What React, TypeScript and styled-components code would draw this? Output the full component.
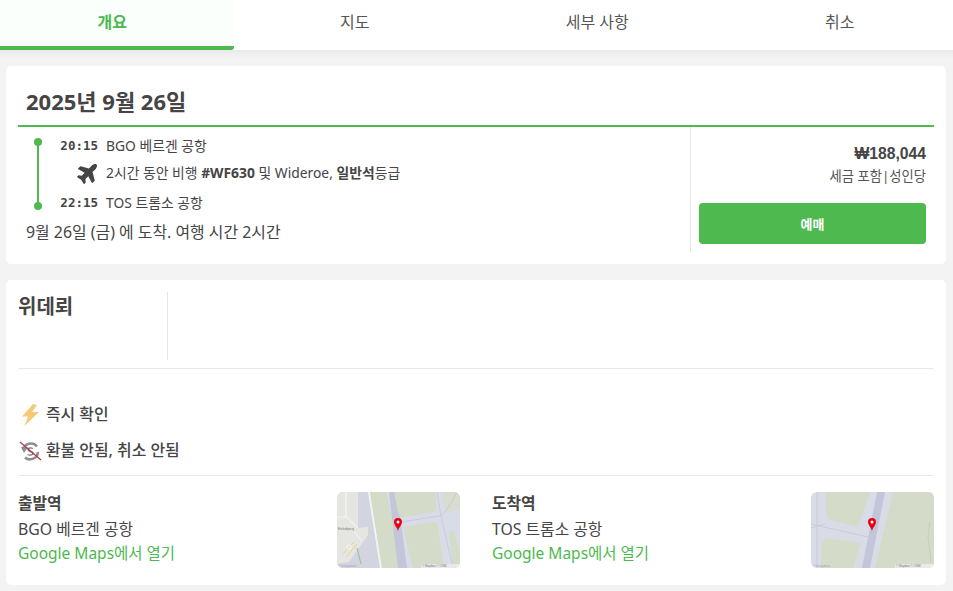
import React from "react";
import styled, { createGlobalStyle } from "styled-components";
import { FaPlane } from "react-icons/fa";

const Global = createGlobalStyle`
  html, body { margin: 0; padding: 0; background: #f3f3f3; }
  body { font-family: "Noto Sans", "Noto Sans CJK KR", sans-serif; color: #454545; height: 591px; overflow: hidden; }
  * { box-sizing: border-box; }
`;
const Tabs = styled.nav`
  display: grid; grid-template-columns: repeat(4, 1fr); height: 50px; background: #fff;
  width: 970px; margin-left: -9px;
  box-shadow: 0 2px 8px rgba(0,0,0,.06);
`;
const Tab = styled.div<{ $active?: boolean }>`
  display: flex; align-items: flex-start; justify-content: center; padding-top: 11px;
  font-size: 16px; line-height: 22px; height: 50px;
  color: ${p => (p.$active ? "#4cb84f" : "#555")};
  font-weight: ${p => (p.$active ? 700 : 400)};
  background: ${p => (p.$active ? "#fbfffb" : "#fff")};
  border-bottom: ${p => (p.$active ? "4px solid #4db94f" : "none")};
  border-radius: 0 0 3px 3px;
`;
const Page = styled.main`
  display: flex; flex-direction: column; gap: 16px; padding: 16px 7px 0 6px;
`;
const Card = styled.section<{ $h: number }>`
  background: #fff; border-radius: 5px; padding: 0 12px; height: ${p => p.$h}px;
`;
const DateTitle = styled.h2`
  margin: 0; height: 61px; border-bottom: 2px solid #4db94f; padding: 21px 8px 0;
  font-size: 22px; line-height: 29px; font-weight: 700; color: #454545;
`;
const FlightRow = styled.div`
  display: grid; grid-template-columns: 673px 1fr; height: 125px;
`;
const Left = styled.div`
  border-right: 1px solid #e6e6e6; padding: 9px 8px 0 8px;
`;
const Timeline = styled.div`
  display: grid; grid-template-columns: 24px 1fr;
`;
const Rail = styled.div`
  position: relative; width: 8px; margin: 2px 0 0 8px; height: 72px;
  &::before { content: ""; position: absolute; left: 3px; top: 3px; bottom: 3px; width: 2px; background: #4db94f; }
`;
const Dot = styled.i<{ $bottom?: boolean }>`
  position: absolute; left: 0; width: 8px; height: 8px; border-radius: 50%; background: #4db94f;
  ${p => (p.$bottom ? "bottom: 0;" : "top: 0;")}
`;
const Stops = styled.div`
  display: grid; grid-template-rows: 19px 36px 24px; font-size: 13.85px; align-items: center;
`;
const Stop = styled.div`
  display: grid; grid-template-columns: 49px 1fr; column-gap: 8px; align-items: center;
  margin-left: -1px; line-height: 18px;
`;
const Time = styled.span`
  font-family: "DejaVu Sans Mono", monospace; font-weight: 700; font-size: 12.5px; text-align: right; color: #454545;
`;
const PlaneCell = styled.span`
  display: flex; justify-content: flex-end; font-size: 23px; line-height: 0; color: #454545; margin-right: -2px;
  svg { transform: rotate(-45deg); display: block; margin-top: -2px; }
`;
const B = styled.b`font-weight: 700;`;
const Arrive = styled.div`
  font-size: 15.9px; line-height: 20px; margin-top: 7px;
`;
const Right = styled.div`
  display: flex; flex-direction: column; align-items: stretch; padding: 18px 8px 0 8px; text-align: right;
`;
const Price = styled.div`
  font-family: "Liberation Sans", sans-serif; font-weight: 700; font-size: 15.7px; line-height: 18px; color: #454545;
`;
const Tax = styled.div`
  font-size: 13.3px; line-height: 18px; margin-top: 4px; color: #555;
`;
const Buy = styled.button`
  margin-top: 18px; height: 41px; border: 0; border-radius: 4px; background: #4db94f; color: #fff;
  font: 700 13px "Noto Sans", "Noto Sans CJK KR", sans-serif; padding: 0;
`;
const AirlineRow = styled.div`
  height: 77px; margin-top: 12px; border-bottom: 1px solid #e8e8e8;
`;
const AirlineName = styled.h3`
  margin: 0; width: 150px; height: 68px; border-right: 1px solid #e6e6e6;
  font-size: 20px; line-height: 30px; font-weight: 700; color: #454545;
`;
const Perks = styled.div`
  height: 107px; border-bottom: 1px solid #e8e8e8; padding-top: 33px; display: flex; flex-direction: column; gap: 14px;
`;
const Perk = styled.div`
  display: flex; align-items: center; gap: 4px; height: 22px; font-size: 15.9px; font-weight: 500; color: #454545;
`;
const PerkIcon = styled.svg`
  width: 24px; height: 24px; flex: none; margin-top: 4px;
`;
const Places = styled.div`
  display: grid; grid-template-columns: 1fr 1fr; column-gap: 32px; padding-top: 16px;
`;
const Place = styled.div`
  display: flex; justify-content: space-between;
`;
const PlaceText = styled.div`
  display: flex; flex-direction: column; font-size: 15.8px; line-height: 24px; margin-top: -1px;
`;
const PlaceTitle = styled.strong`font-weight: 700; font-size: 15.8px; margin-bottom: 2px;`;
const Link = styled.a`color: #4db94f; font-size: 15.5px;`;
const MapFrame = styled.svg`
  width: 123px; height: 76px; border-radius: 6px; display: block; flex: none;
`;

const GREEN = "#d4dbc8";
const LAV = "#d9dbe6";
const RUN = "#c3c6da";

const Pin = ({ x, y }: { x: number; y: number }) => (
  <g transform={`translate(${x} ${y})`}>
    <path d="M0 5C-1 1-4-1-4-4A4 4 0 1 1 4-4C4-1 1 1 0 5Z" fill="#e9000f" />
    <circle cx="0" cy="-4" r="1.500" fill="#fff" />
  </g>
);
const Attribution = () => (
  <g>
    <rect x="84" y="72" width="38" height="4" fill="#e9e9e9" />
    <text x="85" y="75" fontSize="3" fill="#777" fontFamily="Liberation Sans, sans-serif">© Mapbox © OSM</text>
    <text x="2" y="74.500" fontSize="4" fill="#a9adb4" fontFamily="Liberation Sans, sans-serif">©mapbox</text>
  </g>
);

const MapA = () => (
  <MapFrame viewBox="0 0 123 76">
    <defs><filter id="ba"><feGaussianBlur stdDeviation=".4" /></filter></defs>
    <rect width="123" height="76" fill={LAV} />
    <g filter="url(#ba)">
      <path d="M0 0H31L43 76H0Z" fill="#d2d4df" />
      <path d="M0 0H21V36L31 35V43L12 70L0 72Z" fill="#e5e5e1" />
      <path d="M9 0V25H0M9 25L21 36M14 36L24 48" stroke="#f7f7f5" strokeWidth="1" fill="none" />
      <path d="M31 0L43 76H45L33 0Z" fill="#f3f3f5" />
      <path d="M33 0H49L68 76H45Z" fill={GREEN} />
      <path d="M52 0H60L70 76H61Z" fill={RUN} />
      <path d="M57 0H98Q101 16 97 20L66 25Q62 25 61 20Z" fill={GREEN} />
      <path d="M66 35L96 30Q100 30 101 36L107 76H76Z" fill={GREEN} />
      <path d="M105 0H123V16L112 21Q107 18 105 0Z" fill="#d8ddcf" />
      <path d="M112 40L116 38L123 60V76H116Z" fill={GREEN} />
      <path d="M64 30L102 24Q108 24 120 0M100 0L104 24L116 76" stroke="#c9cbdc" strokeWidth="1" fill="none" />
      <path d="M6 62L17 50M9 65L20 52" stroke="#e6d58a" strokeWidth="1" />
      <path d="M20 56L24 72" stroke="#9dbb94" strokeWidth="1" />
      <circle cx="12" cy="55" r="2" fill="none" stroke="#f7f7f5" strokeWidth="1" />
    </g>
    <text x="1" y="37.500" fontSize="3.600" fill="#777" fontFamily="Liberation Sans, sans-serif">Eriksbjerg</text>
    <Attribution />
    <Pin x={61} y={34} />
  </MapFrame>
);
const MapB = () => (
  <MapFrame viewBox="0 0 123 76">
    <defs><filter id="bb"><feGaussianBlur stdDeviation=".4" /></filter></defs>
    <rect width="123" height="76" fill={LAV} />
    <g filter="url(#bb)">
      <path d="M15 0H59L47 35L20 28Q15 26 15 20Z" fill={GREEN} />
      <path d="M11 52Q13 45 22 47L50 51L42 76H10Z" fill={GREEN} />
      <path d="M82 0H123V76H64Z" fill={GREEN} />
      <path d="M66 0H74L59 76H51Z" fill={RUN} />
      <path d="M0 32L57 45M0 36L14 32M6 0V76" stroke="#c9cbdc" strokeWidth="1" fill="none" />
      <path d="M119 30L117 45L120 70" stroke="#bfc6ae" strokeWidth=".6" fill="none" />
    </g>
    <Attribution />
    <Pin x={61} y={34} />
  </MapFrame>
);

const Bolt = () => (
  <PerkIcon viewBox="0 0 24 24"><path d="M15 1L4 13.500H10L6.500 23L21 9H14L19 2Z" fill="#f6ca78" /></PerkIcon>
);
const NoRefund = () => (
  <PerkIcon viewBox="0 0 24 24">
    <path d="M5 11A8 8 0 0 1 19 7.500M20 13A8 8 0 0 1 7 18.500" fill="none" stroke="#8e8e8e" strokeWidth="2.600" />
    <path d="M3 8H10L6 14Z" fill="#8e8e8e" />
    <path d="M15 9.500Q12 8 10 10Q10 12 12.500 12.500Q15 13 15 15Q12.500 17 9.500 15.500" fill="none" stroke="#777" strokeWidth="1.300" />
    <path d="M2 3L23 21" stroke="#b23c4c" strokeWidth="1.300" />
  </PerkIcon>
);

export default function App() {
  return (
    <>
      <Global />
      <Tabs>
        <Tab $active>개요</Tab>
        <Tab>지도</Tab>
        <Tab>세부 사항</Tab>
        <Tab>취소</Tab>
      </Tabs>
      <Page>
        <Card $h={198}>
          <DateTitle>2025년 9월 26일</DateTitle>
          <FlightRow>
            <Left>
              <Timeline>
                <Rail><Dot /><Dot $bottom /></Rail>
                <Stops>
                  <Stop><Time>20:15</Time><span>BGO 베르겐 공항</span></Stop>
                  <Stop>
                    <PlaneCell><FaPlane /></PlaneCell>
                    <span>2시간 동안 비행 <B>#WF630</B> 및 Wideroe, <B>일반석</B>등급</span>
                  </Stop>
                  <Stop><Time>22:15</Time><span>TOS 트롬소 공항</span></Stop>
                </Stops>
              </Timeline>
              <Arrive>9월 26일 (금) 에 도착. 여행 시간 2시간</Arrive>
            </Left>
            <Right>
              <Price>₩188,044</Price>
              <Tax>세금 포함|성인당</Tax>
              <Buy>예매</Buy>
            </Right>
          </FlightRow>
        </Card>
        <Card $h={305}>
          <AirlineRow>
            <AirlineName>위데뢰</AirlineName>
          </AirlineRow>
          <Perks>
            <Perk><Bolt />즉시 확인</Perk>
            <Perk><NoRefund />환불 안됨, 취소 안됨</Perk>
          </Perks>
          <Places>
            <Place>
              <PlaceText>
                <PlaceTitle>출발역</PlaceTitle>
                <span>BGO 베르겐 공항</span>
                <Link>Google Maps에서 열기</Link>
              </PlaceText>
              <MapA />
            </Place>
            <Place>
              <PlaceText>
                <PlaceTitle>도착역</PlaceTitle>
                <span>TOS 트롬소 공항</span>
                <Link>Google Maps에서 열기</Link>
              </PlaceText>
              <MapB />
            </Place>
          </Places>
        </Card>
      </Page>
    </>
  );
}
